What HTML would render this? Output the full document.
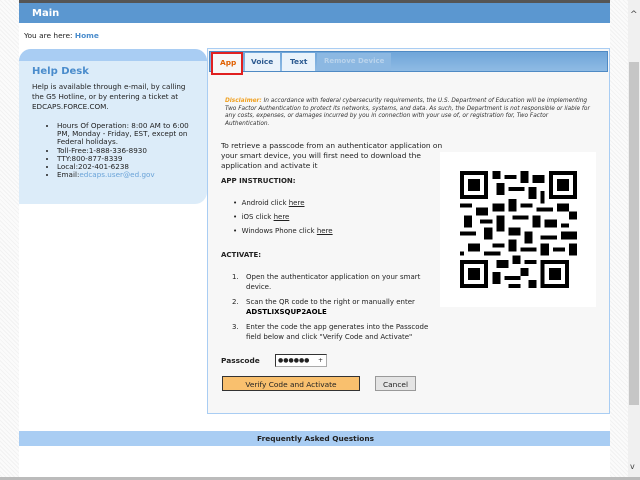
<!DOCTYPE html>
<html><head><style>
*{margin:0;padding:0;box-sizing:border-box}
body{width:640px;height:480px;overflow:hidden;background:#fff;font-family:"DejaVu Sans",Verdana,sans-serif;font-size:7.4px;color:#222;position:relative}
.hatch{position:absolute;top:0;bottom:0;background:repeating-linear-gradient(45deg,#f2f2f2 0 1px,#fbfbfb 1px 3px)}
.abs{position:absolute;white-space:nowrap}
.w{white-space:normal}
a{color:#222}
</style></head><body>
<div class="hatch" style="left:0;width:19px"></div>
<div class="hatch" style="left:610px;width:18px"></div>
<div class="abs" style="left:628px;top:0;width:12px;height:480px;background:#f0f0f0"></div>
<div class="abs" style="left:629px;top:62px;width:10px;height:343px;background:#c6c6c6"></div>
<div class="abs" style="left:630px;top:10px;font-size:9px;color:#444">^</div>
<div class="abs" style="left:630px;top:462px;font-size:8px;color:#444">v</div>
<div class="abs" style="left:19px;top:0;width:591px;height:3px;background:#555"></div>
<div class="abs" style="left:19px;top:3px;width:591px;height:20px;background:#5b97d0;color:#fff;font-weight:bold;font-size:10px;padding:5px 0 0 13px">Main</div>
<div class="abs" style="left:24px;top:31px">You are here: <b style="color:#4a8ccc">Home</b></div>
<!-- help desk -->
<div class="abs w" style="left:19px;top:49px;width:188px;height:155px;background:#dcecf9;border-radius:12px 12px 12px 0;overflow:hidden">
<div style="height:12px;background:#a9cdf3"></div>
<div style="padding:6px 8px 0 13px;line-height:10px;width:182px">
<div style="color:#4a8ccc;font-weight:bold;font-size:10px;margin-bottom:5px">Help Desk</div>
<div style="font-size:7.2px">Help is available through e-mail, by calling the G5 Hotline, or by entering a ticket at EDCAPS.FORCE.COM.</div>
<ul style="margin:10px 0 0 25px;line-height:8.2px;font-size:7.2px">
<li>Hours Of Operation: 8:00 AM to 6:00 PM, Monday - Friday, EST, except on Federal holidays.</li>
<li>Toll-Free:1-888-336-8930</li><li>TTY:800-877-8339</li><li>Local:202-401-6238</li>
<li>Email:<span style="color:#6aa3d8">edcaps.user@ed.gov</span></li></ul></div></div>
<!-- main panel -->
<div class="abs" style="left:207px;top:48px;width:403px;height:366px;background:#f7f7f7;border:1px solid #a9cdf3"></div>
<div class="abs" style="left:209px;top:51px;width:399px;height:21px;background:linear-gradient(#6fa5d9,#8fbbe4);border:1px solid #4f8ac4"></div>
<div class="abs" style="left:211px;top:52px;width:32px;height:23px;background:#f7f7f7;border:2px solid #e02020;color:#e06000;font-weight:bold;padding:4px 0 0 7px">App</div>
<div class="abs" style="left:245px;top:53px;width:35px;height:18px;background:#eaf3fb;color:#2c5a90;font-weight:bold;padding:4px 0 0 6px">Voice</div>
<div class="abs" style="left:282px;top:53px;width:33px;height:18px;background:#eaf3fb;color:#2c5a90;font-weight:bold;padding:4px 0 0 8px">Text</div>
<div class="abs" style="left:317px;top:53px;width:74px;height:18px;background:#8cb8e2;color:#b9d3ec;font-weight:bold;padding:4px 0 0 7px;font-size:7px">Remove Device</div>
<div class="abs w" style="left:225px;top:98px;width:368px;font-size:5.8px;font-style:italic;line-height:7.5px;color:#333"><b style="color:#f0a020">Disclaimer:</b> In accordance with federal cybersecurity requirements, the U.S. Department of Education will be implementing Two Factor Authentication to protect its networks, systems, and data. As such, the Department is not responsible or liable for any costs, expenses, or damages incurred by you in connection with your use of, or registration for, Two Factor Authentication.</div>
<div class="abs w" style="left:221px;top:141px;width:222px;line-height:10px">To retrieve a passcode from an authenticator application on your smart device, you will first need to download the application and activate it</div>
<div class="abs" style="left:221px;top:177px;font-weight:bold;font-size:7px">APP INSTRUCTION:</div>
<ul class="abs" style="left:233px;top:198px;line-height:10px;list-style:none;font-size:7px">
<li>• &nbsp;Android click <u>here</u></li><li style="margin-top:4px">• &nbsp;iOS click <u>here</u></li><li style="margin-top:4px">• &nbsp;Windows Phone click <u>here</u></li></ul>
<div class="abs" style="left:221px;top:251px;font-weight:bold;font-size:7px">ACTIVATE:</div>
<div class="abs w" style="left:232px;top:272px;line-height:10px;font-size:7px;width:205px">
<div style="display:flex"><span style="width:14px;flex:none">1.</span><span>Open the authenticator application on your smart device.</span></div>
<div style="display:flex;margin-top:5px"><span style="width:14px;flex:none">2.</span><span>Scan the QR code to the right or manually enter <b style="color:#000">ADSTLIXSQUP2AOLE</b></span></div>
<div style="display:flex;margin-top:5px"><span style="width:14px;flex:none">3.</span><span>Enter the code the app generates into the Passcode field below and click "Verify Code and Activate"</span></div></div>
<div class="abs" style="left:221px;top:356px;font-weight:bold">Passcode</div>
<div class="abs" style="left:275px;top:354px;width:52px;height:13px;border:1px solid #333;background:#fff;font-size:6px;padding:2px 2px;border-right-color:#aaa;border-bottom-color:#aaa">●●●●●●<span style="position:absolute;right:3px;top:2px">+</span></div>
<div class="abs" style="left:222px;top:376px;width:138px;height:15px;background:#f9c06e;border:1px solid #333;text-align:center;padding-top:3px">Verify Code and Activate</div>
<div class="abs" style="left:375px;top:376px;width:41px;height:15px;background:#e4e4e4;border:1px solid #999;text-align:center;padding-top:3px">Cancel</div>
<!-- QR -->
<div class="abs" style="left:440px;top:152px;width:156px;height:155px;background:#fff"></div>
<svg class="abs" style="left:460px;top:171px" width="117" height="117" viewBox="0 0 29 29" shape-rendering="crispEdges">
<g fill="#000">
<path d="M0 0h7v7H0zM22 0h7v7h-7zM0 22h7v7H0z"/>
<path fill="#fff" d="M1 1h5v5H1zM23 1h5v5h-5zM1 23h5v5H1z"/>
<path d="M2 2h3v3H2zM24 2h3v3h-3zM2 24h3v3H2z"/>
<path d="M8 0h2v2H8zM11 1h3v1h-3zM15 0h2v3h-2zM18 1h3v2h-3zM9 3h2v3H9zM12 4h4v1h-4zM17 4h2v3h-2zM20 5h1v3h-1zM0 8h3v1H0zM4 9h3v2H4zM8 8h3v2H8zM12 7h2v3h-2zM15 8h3v1h-3zM19 9h4v1h-4zM24 8h3v2h-3zM27 10h2v2h-2zM1 11h2v3H1zM5 12h3v1H5zM9 11h2v4H9zM13 11h4v1h-4zM18 11h2v3h-2zM21 12h3v2h-3zM25 13h2v1h-2zM0 15h4v1H0zM6 14h2v3H6zM12 14h3v2h-3zM16 15h2v3h-2zM20 16h4v1h-4zM25 15h4v2h-4zM2 18h3v2H2zM8 18h3v1H8zM12 17h2v3h-2zM15 19h4v1h-4zM20 18h2v3h-2zM23 19h3v1h-3zM27 18h2v3h-2zM0 20h1v1H0zM6 20h4v1H6zM9 22h3v2H9zM13 21h2v2h-2zM16 22h3v1h-3zM20 22h7v7h-7zM8 25h2v3H8zM11 26h4v1h-4zM15 24h2v2h-2zM17 27h2v2h-2zM12 28h3v1h-3z"/>
<path fill="#fff" d="M21 23h5v5h-5z"/><path d="M22 24h3v3h-3z"/>
</g></svg>
<!-- FAQ -->
<div class="abs" style="left:19px;top:431px;width:591px;height:15px;background:#a9cdf3;font-weight:bold;padding:3px 0 0 238px">Frequently Asked Questions</div>
<div class="abs" style="left:0;top:477px;width:640px;height:3px;background:#bbb"></div>
</body></html>
